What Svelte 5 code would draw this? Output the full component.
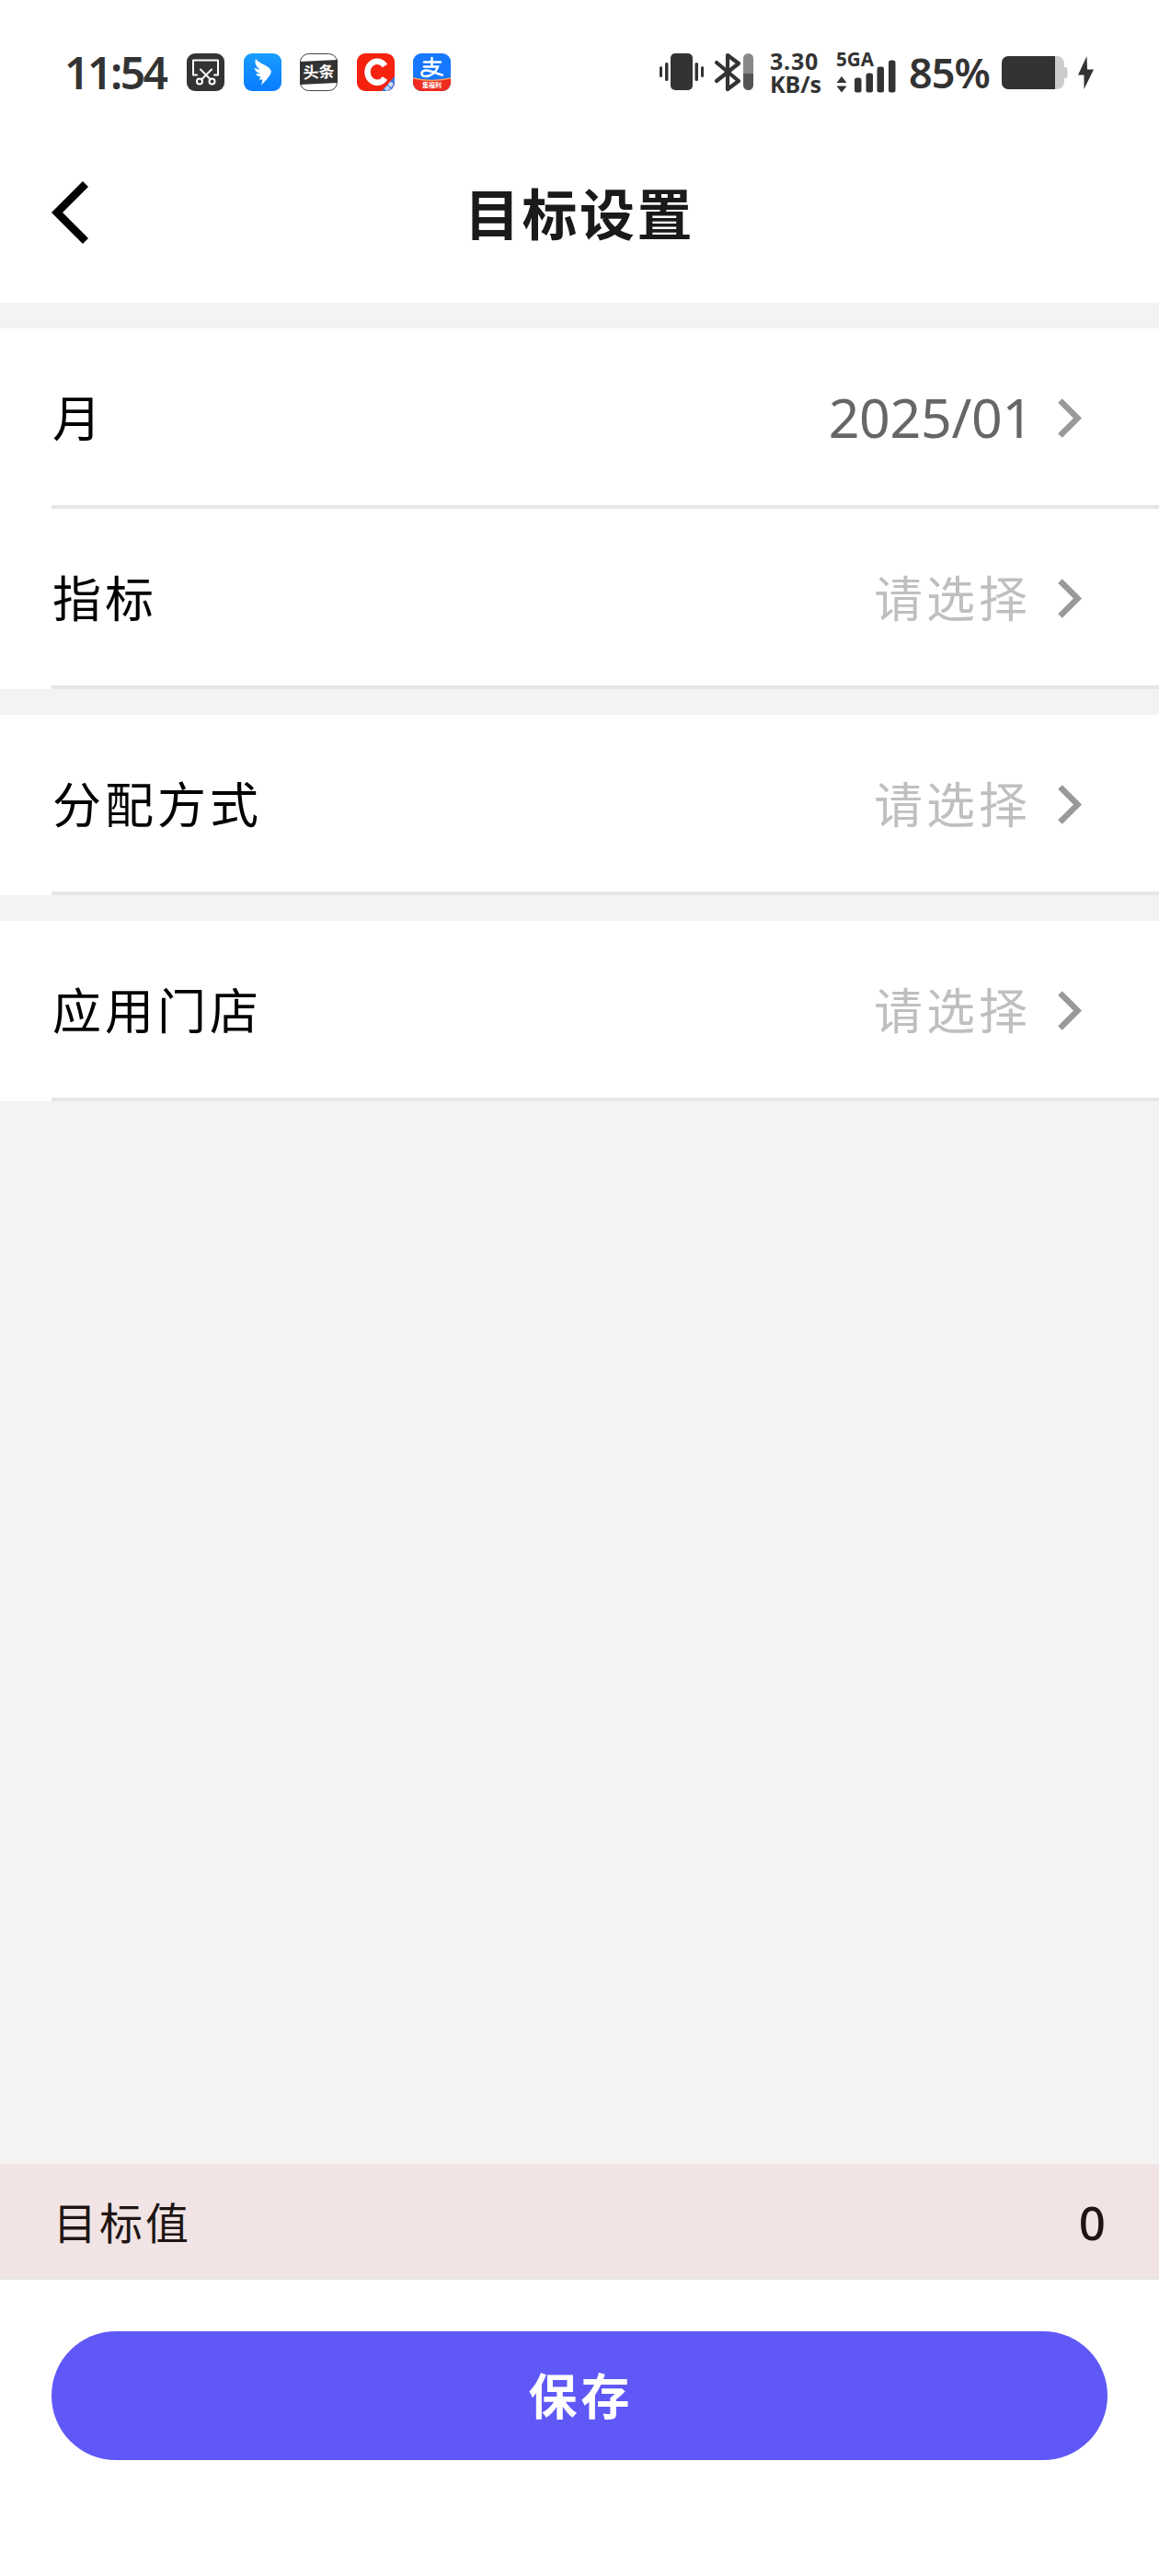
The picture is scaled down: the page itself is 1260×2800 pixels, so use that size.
<script lang="ts">
	interface FormRow {
		label: string;
		value: string;
		placeholder: string;
	}

	const groups: FormRow[][] = [
		[
			{ label: '月', value: '2025/01', placeholder: '请选择' },
			{ label: '指标', value: '', placeholder: '请选择' }
		],
		[{ label: '分配方式', value: '', placeholder: '请选择' }],
		[{ label: '应用门店', value: '', placeholder: '请选择' }]
	];

	let total = $state(0);
</script>

<div class="page">
	<div class="status-bar">
		<span class="time">11:54</span>
		<div class="apps">
			<!-- screenshot -->
			<svg width="41" height="41" viewBox="0 0 41 41">
				<rect width="41" height="41" rx="9" fill="#333" />
				<g fill="none" stroke="#fff" stroke-width="2" stroke-linecap="round" stroke-linejoin="round">
					<path d="M11 23.5H7V7.5h27v16h-4" />
					<path d="M15 17.5l11 11M27 17.5l-11 11" />
					<circle cx="14" cy="30.5" r="3" />
					<circle cx="27.5" cy="30.5" r="3" />
				</g>
			</svg>
			<!-- dingtalk -->
			<svg width="41" height="41" viewBox="0 0 41 41">
				<defs>
					<linearGradient id="ding" x1="0" y1="0" x2="0" y2="1">
						<stop offset="0" stop-color="#189dff" />
						<stop offset="1" stop-color="#087cff" />
					</linearGradient>
				</defs>
				<rect width="41" height="41" rx="9" fill="url(#ding)" />
				<path d="M13 6C17 12 27 12 30 19.500C29 25 24 29 19 35L20.500 28.500H16.500L18.500 25.500C15 25 13.500 23.500 13 22L18 22.500C14 20.500 12 18.500 11.500 16L18 18C13.500 14.500 11.500 11 13 6Z" fill="#fff" />
			</svg>
			<svg width="41" height="41" viewBox="0 0 41 41">
				<rect x=".5" y=".5" width="40" height="40" rx="9" fill="#fff" stroke="#444" />
				<path d="M0 9l41-2v25L0 34z" fill="#333" />
				<text x="20.500" y="26.500" class="logo" font-size="17" transform="rotate(-3 20 20)">头条</text>
			</svg>
			<svg width="41" height="41" viewBox="0 0 41 41">
				<defs>
					<clipPath id="round"><rect width="41" height="41" rx="9" /></clipPath>
				</defs>
				<g clip-path="url(#round)">
					<rect width="41" height="41" fill="#f5220f" />
					<path d="M27 41l14-16v16z" fill="#377be8" />
				</g>
				<path d="M30.500 13.500A10.500 11.500 0 1 0 30.500 27" fill="none" stroke="#fff" stroke-width="6.500" />
				<text x="35" y="38" class="logo" font-size="5.500" transform="rotate(-48 35 36)">抢券</text>
			</svg>
			<svg width="41" height="41" viewBox="0 0 41 41">
				<g clip-path="url(#round)">
					<rect width="41" height="41" fill="#1677ff" />
					<path d="M0 27q20 5 41 0v14H0z" fill="#ed2b20" />
					<path d="M0 27q20 5 41 0" fill="none" stroke="#ff9b55" stroke-width="1.500" />
				</g>
				<g fill="none" stroke="#fff" stroke-width="2.500" stroke-linecap="round">
					<path d="M12 9.500h18M20.500 5v9.500M12 14.500h15C25 21 19 25 13 25C7 24 9 18 15 18.500C20 19 25 22 32 23.500" />
				</g>
				<text x="20.500" y="37" class="logo" font-size="7">集福利</text>
			</svg>
		</div>

		<div class="system">
			<svg class="vibrate" width="48" height="41" viewBox="0 0 48 41" fill="#333">
				<rect x="12" y="0" width="24" height="40" rx="5" />
				<rect x="0" y="14" width="3" height="12" rx="1.500" />
				<rect x="6" y="10" width="3.500" height="20" rx="1.500" />
				<rect x="38.500" y="10" width="3.500" height="20" rx="1.500" />
				<rect x="45" y="14" width="3" height="12" rx="1.500" />
			</svg>
			<svg class="bluetooth" width="43" height="41" viewBox="0 0 43 41">
				<path d="M2 10l24 20-12 9V2l12 9L2 30" fill="none" stroke="#333" stroke-width="4.200" stroke-linecap="round" stroke-linejoin="round" />
				<path d="M31 22V5.500a5.500 5.500 0 0 1 11 0V22z" fill="#888" />
				<path d="M31 22v12.500a5.500 5.500 0 0 0 11 0V22z" fill="#555" />
			</svg>
			<div class="speed">
				<span class="rate">3.30</span>
				<span>KB/s</span>
			</div>
			<svg class="signal" width="66" height="46" viewBox="0 0 66 46" fill="#333">
				<text x="0" y="15.500" class="network" textLength="41" lengthAdjust="spacingAndGlyphs">5GA</text>
				<path d="M6 27l5.500 7H.5zM.5 37.500h11L6 44.500z" />
				<rect x="20" y="28.500" width="7.500" height="16" rx="2.500" />
				<rect x="32.500" y="23.500" width="7.500" height="21" rx="2.500" />
				<rect x="44.500" y="16.500" width="7.500" height="28" rx="2.500" />
				<rect x="57" y="9.500" width="7.500" height="35" rx="2.500" />
			</svg>
			<span class="percent">85%</span>
			<svg class="battery" width="72" height="36" viewBox="0 0 72 36">
				<path d="M58 0h2a8 8 0 0 1 8 8v4h1q2.500 0 2.500 2.500v7Q71.500 24 69 24h-1v4a8 8 0 0 1-8 8h-2z" fill="#ccc" />
				<path d="M7 0h51v36H7a7 7 0 0 1-7-7V7a7 7 0 0 1 7-7z" fill="#333" />
			</svg>
			<svg width="17" height="36" viewBox="0 0 17 36">
				<path d="M9.500 0L0 20.500h6.500V36L17 14.500h-7z" fill="#333" />
			</svg>
		</div>
	</div>

	<header class="nav">
		<button class="back" aria-label="返回">
			<svg width="42" height="70" viewBox="0 0 42 70">
				<path d="M38 4L7 35l31 31" fill="none" stroke="#000" stroke-width="8.500" />
			</svg>
		</button>
		<h1>目标设置</h1>
	</header>

	<main class="content">
		{#each groups as rows}
			<section class="group">
				{#each rows as row}
					<div class="row">
						<span class="label">{row.label}</span>
						{#if row.value}
							<span class="value">{row.value}</span>
						{:else}
							<span class="placeholder">{row.placeholder}</span>
						{/if}
						<svg class="chevron" width="27" height="43" viewBox="0 0 27 43">
							<path d="M2.500 2.500l19 19-19 19" fill="none" stroke="#999" stroke-width="6.500" />
						</svg>
					</div>
				{/each}
			</section>
		{/each}
	</main>

	<div class="total">
		<span class="total-label">目标值</span>
		<span class="total-value">{total}</span>
	</div>
	<footer class="footer">
		<button class="save">保存</button>
	</footer>
</div>

<style>
	:global(body) {
		margin: 0;
	}

	.page {
		display: flex;
		flex-direction: column;
		width: 1260px;
		height: 2800px;
		background: #f3f3f3;
		font-family: 'Noto Sans CJK SC', sans-serif;
		color: #000;
	}

	button {
		padding: 0;
		border: none;
		background: none;
		font-family: inherit;
	}

	svg {
		display: block;
		flex-shrink: 0;
		overflow: visible;
	}

	.status-bar {
		display: flex;
		align-items: center;
		height: 157px;
		padding: 0 71px 0 70px;
		background: #fff;
		color: #333;
		font-family: 'Noto Sans', sans-serif;
	}

	.time {
		width: 133px;
		font-size: 48px;
		font-weight: 600;
		line-height: 60px;
		letter-spacing: -2.5px;
	}

	.apps {
		display: flex;
		gap: 20.5px;
	}

	.logo {
		fill: #fff;
		font-family: 'Noto Sans CJK SC', sans-serif;
		font-weight: 700;
		text-anchor: middle;
	}

	.system {
		display: flex;
		align-items: center;
		margin-left: auto;
	}

	.vibrate {
		margin-right: 12px;
	}

	.bluetooth {
		margin-right: 17px;
	}

	.speed {
		display: flex;
		flex-direction: column;
		width: 72px;
		font-size: 25px;
		font-weight: 700;
		line-height: 25px;
	}

	.rate {
		letter-spacing: 0.8px;
	}

	.network {
		font-size: 21px;
		font-weight: 700;
	}

	.signal {
		margin-right: 13px;
	}

	.percent {
		width: 101px;
		font-size: 45px;
		font-weight: 600;
		line-height: 60px;
		letter-spacing: -1px;
	}

	.battery {
		margin-right: 11px;
	}

	.nav {
		display: grid;
		grid-template-columns: 200px 1fr 200px;
		align-items: center;
		height: 146px;
		padding-bottom: 26px;
		background: #fff;
	}

	.back {
		justify-self: start;
		margin-top: 2px;
		margin-left: 55px;
	}

	h1 {
		margin: 0;
		color: #1a1a1a;
		font-size: 60px;
		font-weight: 600;
		line-height: 80px;
		letter-spacing: 2.5px;
		text-align: center;
	}

	.content {
		display: flex;
		flex: 1;
		flex-direction: column;
		gap: 28px;
		padding-top: 28px;
	}

	.group {
		background: #fff;
	}

	.row {
		display: flex;
		align-items: center;
		box-sizing: border-box;
		height: 196px;
		margin-left: 56px;
		padding-right: 83px;
		border-bottom: 4px solid #e6e6e6;
		font-size: 53px;
		line-height: 80px;
		letter-spacing: 4px;
	}

	.label {
		flex: 1;
		padding: 0 0 3px 1px;
	}

	.value {
		margin-right: -2px;
		color: #666;
		font-family: 'Noto Sans', sans-serif;
		font-size: 59px;
		letter-spacing: -0.3px;
	}

	.placeholder {
		padding-bottom: 3px;
		color: #bfbfbf;
	}

	.chevron {
		margin-top: 2px;
		margin-left: 29px;
	}

	.total {
		display: flex;
		align-items: center;
		justify-content: space-between;
		box-sizing: border-box;
		height: 126px;
		padding: 0 58px;
		border-bottom: 4px solid #e9e5e2;
		background: #f2e4e4;
		color: #1f1614;
	}

	.total-label {
		font-size: 47px;
		letter-spacing: 3px;
	}

	.total-value {
		padding-top: 3px;
		font-family: 'Noto Sans', sans-serif;
		font-size: 51px;
		font-weight: 500;
	}

	.footer {
		height: 266px;
		padding: 56px 56px 0;
		background: #fff;
	}

	.save {
		width: 100%;
		height: 140px;
		padding: 0 0 4px 3px;
		border-radius: 70px;
		background: #5f58f7;
		color: #fff;
		font-size: 53px;
		font-weight: 700;
		letter-spacing: 4px;
	}
</style>
